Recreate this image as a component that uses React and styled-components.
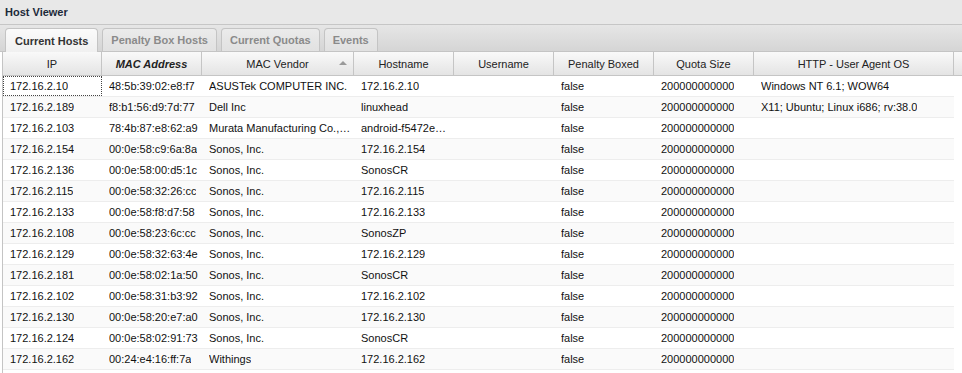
import styled, { createGlobalStyle } from "styled-components";

const GlobalStyle = createGlobalStyle`
  html, body {
    margin: 0;
    padding: 0;
    background: #ffffff;
    font-family: "Liberation Sans", Arial, sans-serif;
    font-size: 11px;
    color: #000;
  }
`;

const Panel = styled.div`
  width: 962px;
  height: 373px;
  overflow: hidden;
  display: flex;
  flex-direction: column;
  background: #fff;
`;

const TitleBar = styled.div`
  height: 25px;
  flex: 0 0 25px;
  box-sizing: border-box;
  display: flex;
  align-items: center;
  padding: 0 5px;
  background: #e8e8e8;
  border-bottom: 1px solid #c6c6c6;
  font-weight: bold;
  font-size: 11px;
  color: #1c2a3a;
`;

const TabStrip = styled.div`
  height: 27px;
  flex: 0 0 27px;
  box-sizing: border-box;
  display: flex;
  align-items: flex-end;
  gap: 4px;
  padding: 0 0 0 5px;
  background: linear-gradient(#e6e6e6, #d5d5d5);
  border-bottom: 1px solid #c4c4c4;
`;

const Tab = styled.div`
  height: ${(p) => (p.$active ? "24px" : "23px")};
  box-sizing: border-box;
  padding: 0 ${(p) => p.$pad}px;
  display: flex;
  align-items: center;
  border: 1px solid #c4c4c4;
  border-bottom: none;
  border-radius: 4px 4px 0 0;
  background: ${(p) =>
    p.$active ? "linear-gradient(#fbfbfb, #f0f0f0)" : "linear-gradient(#ebebeb, #e1e1e1)"};
  font-weight: bold;
  font-size: 11px;
  color: ${(p) => (p.$active ? "#333" : "#8a8a8a")};
  margin-bottom: ${(p) => (p.$active ? "-1px" : "0")};
`;

const Grid = styled.div`
  flex: 1;
  display: flex;
  flex-direction: column;
  border-left: 1px solid #c4c4c4;
  margin-left: 2px;
`;

const HeaderRow = styled.div`
  display: flex;
  height: 24px;
  flex: 0 0 24px;
  box-sizing: border-box;
  background: linear-gradient(#f9f9f9, #e4e4e4);
  border-bottom: 1px solid #c5c5c5;
`;

const HeaderCell = styled.div`
  width: ${(p) => p.$w}px;
  flex: 0 0 ${(p) => p.$w}px;
  box-sizing: border-box;
  border-right: 1px solid #c5c5c5;
  display: flex;
  align-items: center;
  justify-content: center;
  position: relative;
  color: #222;
  font-weight: ${(p) => (p.$em ? "bold" : "normal")};
  font-style: ${(p) => (p.$em ? "italic" : "normal")};
`;

const SortArrow = styled.span`
  position: absolute;
  right: 6px;
  top: 9px;
  width: 0;
  height: 0;
  border-left: 4px solid transparent;
  border-right: 4px solid transparent;
  border-bottom: 4px solid #9a9a9a;
`;

const HeaderFill = styled.div`
  flex: 1;
`;

const Body = styled.div`
  width: 951px;
  display: flex;
  flex-direction: column;
`;

const Row = styled.div`
  display: flex;
  height: 21px;
  box-sizing: border-box;
  background: ${(p) => (p.$alt ? "#fafafa" : "#ffffff")};
  border-bottom: 1px solid #ededed;
`;

const Cell = styled.div`
  width: ${(p) => p.$w}px;
  flex: 0 0 ${(p) => p.$w}px;
  box-sizing: border-box;
  padding: 0 1px 0 6px;
  display: flex;
  align-items: center;
  white-space: nowrap;
  overflow: hidden;
  color: #111;
  border: 1px dotted ${(p) => (p.$focus ? "#444" : "transparent")};
`;

const Clip = styled.span`
  overflow: hidden;
  text-overflow: ellipsis;
`;

const columns = [
  { title: "IP", w: 99 },
  { title: "MAC Address", w: 100, em: true },
  { title: "MAC Vendor", w: 152, sort: true },
  { title: "Hostname", w: 100 },
  { title: "Username", w: 100 },
  { title: "Penalty Boxed", w: 100 },
  { title: "Quota Size", w: 100 },
  { title: "HTTP - User Agent OS", w: 200 },
];

const Q = "200000000000";

const hosts = [
  ["172.16.2.10", "48:5b:39:02:e8:f7", "ASUSTek COMPUTER INC.", "172.16.2.10", "", "false", Q, "Windows NT 6.1; WOW64"],
  ["172.16.2.189", "f8:b1:56:d9:7d:77", "Dell Inc", "linuxhead", "", "false", Q, "X11; Ubuntu; Linux i686; rv:38.0"],
  ["172.16.2.103", "78:4b:87:e8:62:a9", "Murata Manufacturing Co., Ltd.", "android-f5472e8c1a2b", "", "false", Q, ""],
  ["172.16.2.154", "00:0e:58:c9:6a:8a", "Sonos, Inc.", "172.16.2.154", "", "false", Q, ""],
  ["172.16.2.136", "00:0e:58:00:d5:1c", "Sonos, Inc.", "SonosCR", "", "false", Q, ""],
  ["172.16.2.115", "00:0e:58:32:26:cc", "Sonos, Inc.", "172.16.2.115", "", "false", Q, ""],
  ["172.16.2.133", "00:0e:58:f8:d7:58", "Sonos, Inc.", "172.16.2.133", "", "false", Q, ""],
  ["172.16.2.108", "00:0e:58:23:6c:cc", "Sonos, Inc.", "SonosZP", "", "false", Q, ""],
  ["172.16.2.129", "00:0e:58:32:63:4e", "Sonos, Inc.", "172.16.2.129", "", "false", Q, ""],
  ["172.16.2.181", "00:0e:58:02:1a:50", "Sonos, Inc.", "SonosCR", "", "false", Q, ""],
  ["172.16.2.102", "00:0e:58:31:b3:92", "Sonos, Inc.", "172.16.2.102", "", "false", Q, ""],
  ["172.16.2.130", "00:0e:58:20:e7:a0", "Sonos, Inc.", "172.16.2.130", "", "false", Q, ""],
  ["172.16.2.124", "00:0e:58:02:91:73", "Sonos, Inc.", "SonosCR", "", "false", Q, ""],
  ["172.16.2.162", "00:24:e4:16:ff:7a", "Withings", "172.16.2.162", "", "false", Q, ""],
];

const tabs = [
  { label: "Current Hosts", active: true, pad: 9 },
  { label: "Penalty Box Hosts", pad: 8 },
  { label: "Current Quotas", pad: 8 },
  { label: "Events", pad: 8 },
];

const App = () => {
  return (
    <Panel>
      <GlobalStyle />
      <TitleBar>Host Viewer</TitleBar>
      <TabStrip>
        {tabs.map((t) => (
          <Tab key={t.label} $active={t.active} $pad={t.pad}>
            {t.label}
          </Tab>
        ))}
      </TabStrip>
      <Grid>
        <HeaderRow>
          {columns.map((c) => (
            <HeaderCell key={c.title} $w={c.w} $em={c.em}>
              {c.title}
              {c.sort && <SortArrow />}
            </HeaderCell>
          ))}
          <HeaderFill />
        </HeaderRow>
        <Body>
          {hosts.map((h, i) => (
            <Row key={h[0]} $alt={i % 2 === 1}>
              {h.map((v, j) => (
                <Cell key={j} $w={columns[j].w} $focus={i === 0 && j === 0}>
                  <Clip>{v}</Clip>
                </Cell>
              ))}
            </Row>
          ))}
        </Body>
      </Grid>
    </Panel>
  );
};

export default App;
